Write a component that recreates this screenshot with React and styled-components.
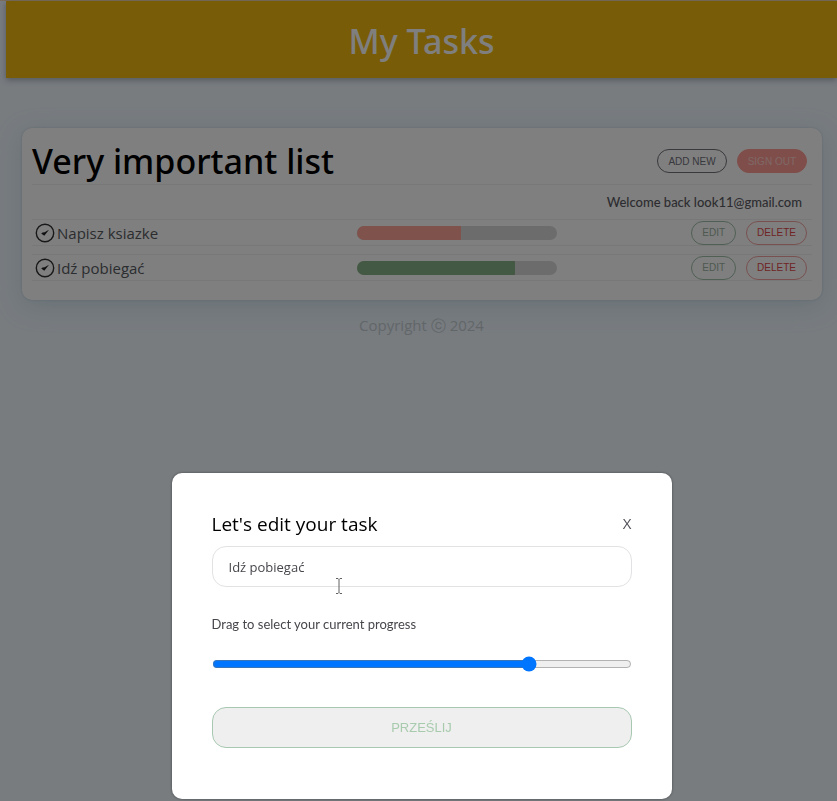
import React, { useState } from 'react';
import styled, { createGlobalStyle } from 'styled-components';

const GlobalStyle = createGlobalStyle`
    * {
        box-sizing: border-box;
    }

    body {
        margin: 0;
        background-color: #F0F8FF;
        color: #565A60;
        font-family: "Trebuchet MS", "Open Sans", "Noto Sans", sans-serif;
        font-size: 15px;
    }

    h1, h3, p, ul {
        margin: 0;
        padding: 0;
        font-weight: 500;
    }
`;

const Page = styled.div`
    min-height: 100vh;
    padding-left: 6px;
    border-top: 1px solid #F5DCB4;
`;

const Header = styled.header`
    display: flex;
    align-items: center;
    justify-content: center;
    height: 77px;
    padding-top: 2px;
    background-color: #F3B810;
    box-shadow: 0 2px 6px rgba(60, 70, 80, 0.4);
`;

const HeaderTitle = styled.h1`
    color: #FFFFFF;
    font-family: "Noto Sans", sans-serif;
    font-size: 34px;
`;

const Card = styled.main`
    margin: 50px 15px 0 16px;
    padding: 10px 10px 19px;
    border-radius: 10px;
    background-color: #FFFFFF;
    box-shadow: 0 6px 24px rgba(150, 185, 200, 0.35), 0 0 2px rgba(140, 170, 195, 0.5);
`;

const ListHeader = styled.div`
    display: flex;
    align-items: center;
    justify-content: space-between;
    height: 47px;
    padding-right: 5px;
    border-bottom: 1px solid #F0F0F0;
`;

const ListTitle = styled.h1`
    color: #000000;
    font-family: "Noto Sans", sans-serif;
    font-size: 34px;
`;

const ButtonContainer = styled.div`
    display: flex;
    justify-content: flex-end;
    gap: 10px;
`;

const Button = styled.button`
    height: 24px;
    padding: 0 10px;
    border: 1px solid ${({ $border }) => $border};
    border-radius: 12px;
    background-color: ${({ $background }) => $background || 'transparent'};
    color: ${({ $color }) => $color};
    font-family: "Liberation Sans", Arial, sans-serif;
    font-size: 10px;
    text-transform: uppercase;
    cursor: pointer;
`;

const UserEmail = styled.p`
    padding: 7px 10px 7px 0;
    color: #5A5A62;
    font-family: "Trebuchet MS", Lato, sans-serif;
    font-size: 13px;
    line-height: 20px;
    text-align: right;
`;

const TaskList = styled.ul`
    display: flex;
    flex-direction: column;
    gap: 8px;
    list-style: none;
`;

const TaskItem = styled.li`
    display: grid;
    grid-template-columns: 5fr 7fr;
    align-items: center;
    height: 27px;
    padding: 0 5px 0 3px;
    border: solid #F0F0F0;
    border-width: 1px 0;
`;

const InfoContainer = styled.div`
    display: flex;
    align-items: center;
    gap: 2px;
`;

const TaskTitle = styled.p`
    line-height: 20px;
`;

const TaskActions = styled.div`
    display: flex;
    align-items: center;
    justify-content: space-between;
`;

const Tick = styled.svg`
    width: 20px;
    height: 20px;
`;

const ProgressBar = styled.div`
    width: 200px;
    height: 14px;
    overflow: hidden;
    border-radius: 7px;
    background-color: #D8D8D8;
`;

const ProgressFill = styled.div`
    height: 100%;
    background-color: ${({ $color }) => $color};
`;

const Copyright = styled.footer`
    padding-top: 14px;
    color: #C4CDD3;
    line-height: 22px;
    text-align: center;
`;

const Overlay = styled.div`
    position: fixed;
    inset: 0;
    display: flex;
    align-items: flex-end;
    justify-content: center;
    padding: 0 0 2px 6px;
    background-color: rgba(0, 0, 0, 0.5);
`;

const Modal = styled.section`
    width: 500px;
    padding: 40px 40px 51px;
    border-radius: 10px;
    background-color: #FFFFFF;
    box-shadow: 0 0 3px rgba(0, 0, 0, 0.4);
`;

const FormTitleContainer = styled.div`
    display: flex;
    align-items: center;
    justify-content: space-between;
    height: 22px;
`;

const FormTitle = styled.h3`
    color: #000000;
    font-size: 19px;
`;

const CloseButton = styled.button`
    align-self: flex-start;
    padding: 0;
    border: none;
    background: none;
    color: #505058;
    font-family: inherit;
    font-size: 15px;
    line-height: 20px;
    cursor: pointer;
`;

const Form = styled.form`
    position: relative;
    display: flex;
    flex-direction: column;
    padding-top: 11px;
`;

const Input = styled.input`
    height: 41px;
    padding: 0 16px;
    border: 1px solid #E2E2E4;
    border-radius: 14px;
    outline: none;
    background-color: #FFFFFF;
    color: #46464C;
    font-family: inherit;
    font-size: 13px;
`;

const Label = styled.label`
    margin-top: 27px;
    color: #46464C;
    font-family: "Trebuchet MS", Lato, sans-serif;
    font-size: 13px;
    line-height: 20px;
`;

const Range = styled.input`
    height: 16px;
    margin: 22px 0 35px;
`;

const SubmitButton = styled.button`
    height: 41px;
    border: 1px solid #A8C8B2;
    border-radius: 14px;
    background-color: #EFEFEF;
    color: #A8CBAE;
    font-family: "Liberation Sans", Arial, sans-serif;
    font-size: 13px;
    cursor: pointer;
`;

const Pointer = styled.svg`
    position: absolute;
    top: 42px;
    left: 123px;
    width: 8px;
    height: 18px;
    pointer-events: none;
`;

const tasks = [
    { id: 1, title: 'Napisz ksiazke', progress: 52, color: '#FFA499' },
    { id: 2, title: 'Idź pobiegać', progress: 79, color: '#86B386' },
];

const TickIcon = () => (
    <Tick viewBox="0 0 20 20" aria-hidden="true">
        <circle cx="10" cy="10" r="8.7" fill="none" stroke="#303034" strokeWidth="1.4" />
        <path d="M14 6.8 L9.3 12.8 L6.2 10.6 L7.6 9.5 L9.6 9.3 Z" fill="#202024" />
    </Tick>
);

const ListItem = ({ task }) => (
    <TaskItem>
        <InfoContainer>
            <TickIcon />
            <TaskTitle>{task.title}</TaskTitle>
        </InfoContainer>
        <TaskActions>
            <ProgressBar>
                <ProgressFill $color={task.color} style={{ width: `${task.progress}%` }} />
            </ProgressBar>
            <ButtonContainer>
                <Button $border="#9FBFA9" $color="#9CB3A0">Edit</Button>
                <Button $border="#F2A0A0" $color="#E04848">Delete</Button>
            </ButtonContainer>
        </TaskActions>
    </TaskItem>
);

const EditModal = () => {
    const [title, setTitle] = useState('Idź pobiegać');
    const [progress, setProgress] = useState(76.5);

    return (
        <Overlay>
            <Modal role="dialog" aria-labelledby="form-title">
                <FormTitleContainer>
                    <FormTitle id="form-title">Let's edit your task</FormTitle>
                    <CloseButton type="button">X</CloseButton>
                </FormTitleContainer>
                <Form onSubmit={(e) => e.preventDefault()}>
                    <Input
                        type="text"
                        name="title"
                        aria-label="Task"
                        required
                        maxLength={30}
                        value={title}
                        onChange={(e) => setTitle(e.target.value)}
                    />
                    <Label htmlFor="range">Drag to select your current progress</Label>
                    <Range
                        type="range"
                        id="range"
                        name="progress"
                        min="0"
                        max="100"
                        step="0.5"
                        value={progress}
                        onChange={(e) => setProgress(e.target.value)}
                    />
                    <SubmitButton type="submit">PRZEŚLIJ</SubmitButton>
                    <Pointer viewBox="0 0 8 18" aria-hidden="true">
                        <path d="M1 1.5 H3 L4 2.5 L5 1.5 H7 M4 2.5 V15.5 M1 16.5 H3 L4 15.5 L5 16.5 H7" fill="none" stroke="#606060" />
                    </Pointer>
                </Form>
            </Modal>
        </Overlay>
    );
};

const App = () => {
    return (
        <>
            <GlobalStyle />
            <Page>
                <Header>
                    <HeaderTitle>My Tasks</HeaderTitle>
                </Header>
                <Card>
                    <ListHeader>
                        <ListTitle>Very important list</ListTitle>
                        <ButtonContainer>
                            <Button $border="#70707A" $color="#70707A">Add new</Button>
                            <Button $border="#FF9C94" $background="#FF9C94" $color="#FFD0CC">Sign out</Button>
                        </ButtonContainer>
                    </ListHeader>
                    <UserEmail>Welcome back look11@gmail.com</UserEmail>
                    <TaskList>
                        {tasks.map((task) => <ListItem key={task.id} task={task} />)}
                    </TaskList>
                </Card>
                <Copyright>Copyright ⓒ 2024</Copyright>
            </Page>
            <EditModal />
        </>
    );
};

export default App;
